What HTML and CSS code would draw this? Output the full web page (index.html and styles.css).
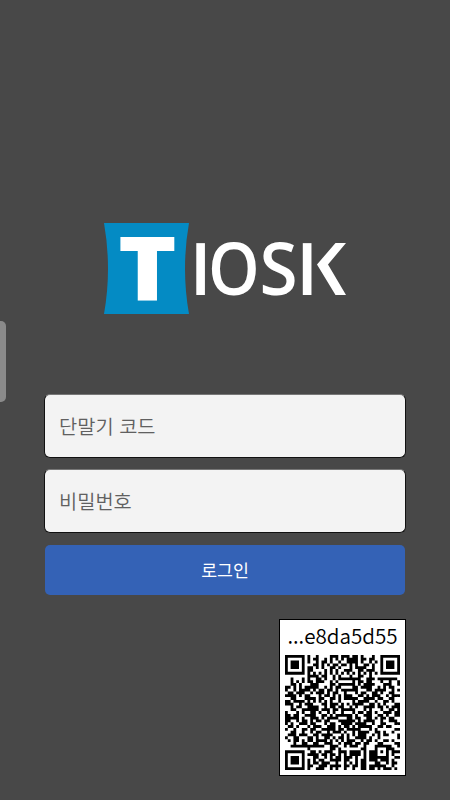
FILE: index.html
```html
<!DOCTYPE html>
<html lang="ko">
<head>
  <meta charset="UTF-8" />
  <meta name="viewport" content="width=device-width, initial-scale=1.0"/>
  <title>TIOSK 로그인</title>
  <link rel="stylesheet" href="styles.css">
</head>
<body>
  <div class="side-handle"></div>

  <main>
    <svg class="logo" width="244" height="92" viewBox="0 0 244 92" role="img" aria-label="TIOSK">
      <path class="logo-box" d="M0 0H85Q77 46 85 91H0Q8 46 0 0Z"/>
      <text class="logo-t" transform="translate(14 77) scale(1.13 1)">T</text>
      <text class="logo-text" transform="translate(85.500 72)">I</text>
      <text class="logo-text" transform="translate(104 72) scale(.9 1)">O</text>
      <text class="logo-text" transform="translate(155.500 72) scale(.95 1)">S</text>
      <text class="logo-text" transform="translate(192 72)">I</text>
      <path class="logo-arrow" d="M231.500 20H242L224 41.500L242 72H231.500L213 41.500Z"/>
    </svg>

    <form onsubmit="return false">
      <input type="text" placeholder="단말기 코드" />
      <input type="password" placeholder="비밀번호" />
      <button class="login-btn">로그인</button>
    </form>

    <div class="device">
      <div class="device-id">...e8da5d55</div>
      <svg class="qr" id="qr" viewBox="0 0 41 41"></svg>
    </div>
  </main>

  <script src="qr.js"></script>
</body>
</html>
```
FILE: styles.css
```css
:root {
  --bg-color: #484848;
  --input-bg: #f3f3f3;
  --btn-bg: #3462b6;
  --logo-blue: #048bc4;
}

* {
  box-sizing: border-box;
}

body {
  margin: 0;
  height: 800px;
  overflow: hidden;
  background: var(--bg-color);
  font-family: "Noto Sans CJK KR", sans-serif;
}

.side-handle {
  position: absolute;
  left: 0;
  top: 321px;
  width: 6px;
  height: 81px;
  background: #8b8b8b;
  border-radius: 0 5px 5px 0;
}

main {
  display: flex;
  flex-direction: column;
  padding: 223px 44px 0;
}

.logo {
  display: block;
  margin-left: 60px;
  overflow: visible;
}

.logo-box {
  fill: var(--logo-blue);
}

.logo-t {
  fill: white;
  font: 800 88px "Open Sans", sans-serif;
}

.logo-text {
  fill: white;
  font: 600 73px "Open Sans", sans-serif;
}

.logo-arrow {
  fill: white;
}

form {
  display: flex;
  flex-direction: column;
  gap: 11px;
  margin-top: 79px;
}

input {
  height: 64px;
  padding: 0 14px 2px;
  background: var(--input-bg);
  border: 1px solid #111;
  border-top-color: #777;
  border-radius: 6px;
  font: 350 19.8px "Noto Sans CJK KR", sans-serif;
}

input::placeholder {
  color: #606060;
}

.login-btn {
  height: 50px;
  margin: 1px 1px 0;
  padding: 0 0 2px;
  background: var(--btn-bg);
  border: none;
  border-radius: 5px;
  color: white;
  font: 17.3px "Noto Sans CJK KR", sans-serif;
}

.device {
  align-self: flex-end;
  width: 127px;
  height: 157px;
  margin-top: 24px;
  padding: 0 5px;
  background: white;
  border: 1px solid black;
}

.device-id {
  height: 35px;
  line-height: 30px;
  font-size: 20.6px;
  font-weight: 350;
  text-align: center;
  white-space: nowrap;
}

.qr {
  display: block;
  width: 115px;
  height: 115px;
}
```
FILE: qr.js
```js
const rows = [
  "#######.#..#....###.###.##.#...#..#######",
  "#.....#.#.##..#.#.#.#.####.##.##..#.....#",
  "#.###.#.#..#.##.#..#..####.#..#.#.#.###.#",
  "#.###.#...##.#.#.##.##.#.#..##.#..#.###.#",
  "#.###.#.##.#.#..##.#...#.####..#..#.###.#",
  "#.....#.##....#.#.#..###..##.###..#.....#",
  "#######.#.#.#.#.#.#.#.#.#.#.#.#.#.#######",
  "........####.##..#.#...#..##..#..........",
  "..#...#.#..##.#..#.########..###.#######.",
  "..#.#.#.##.###..#.#.....#.##.##...#..#..#",
  "..##.#...###....##.######.#.####...###..#",
  "##.#.#.#####..#.#.##....##.####..#.#.##..",
  "#..#.####.#.##.##.#.######...##.####..#.#",
  ".##.###..#.###.#.##..#...#.##..##.#..##..",
  "####.#.##...#.##.#.#.###..##.#.###..#.###",
  "..##...####.##..##.#.#####..####.##..##..",
  "##.####.#.#.#.#.#..#....#.####..#..##.#..",
  "###..#.###...##.###.#.#.####..##.#.#...##",
  "..#.##..####..#.##.##..#.#..####.##.#.###",
  "..##..######.###.##.#####...#.#...#..##.#",
  "#...#.#..##.#..#.#..#...#.##.##.#..###.##",
  "##.##..####..##.#.######.#..###..##.#..##",
  "#####.#..###.#.####...##.##..##.#.##.##..",
  "##..#.##.#.##.##...######.#.####..#..###.",
  "#.#..###.##...#.##..####.####..#..##...##",
  ".##.#...#.###..###.#.##.#.#####..##.##...",
  "#..#..##.##..#####.##.#####...#.#......##",
  "..##..#..#.##..#.###.#..#.####..##.#..#..",
  ".###.###..##.####...#.#.#.###..#.#.##...#",
  "#..##...##.#..##.#.##.#..####.#..#......#",
  ".#.##.#.##.####.#.#.#.###..#.##.#..##.#..",
  "...#..##..##..###..#.###.##.##...##....##",
  "..############..###..#.###..#...######..#",
  "........#.......##.#.......##...#...###..",
  "#######..##.#.###..###.####.#.###.#.#.###",
  "#.....#.####.##.##.#.#.####.#.###...#.#..",
  "#.###.#...##..#.#.##.###.#..#.#######..##",
  "#.###.#.#.#.##..####.##..#.##.###.###.#..",
  "#.###.#.#.##.###..#..#.#.#.##...##..#.##.",
  "#.....#.##..###.####.##.##.##.######..#..",
  "#######.#..###..#.#..#..#..##.##.#.###.#."
];

// one unit square per dark module
let path = "";
rows.forEach((row, y) => {
  for (let x = 0; x < row.length; x++) {
    if (row[x] === "#") path += `M${x} ${y}h1v1h-1z`;
  }
});
document.getElementById("qr").innerHTML = `<path d="${path}"/>`;
```
